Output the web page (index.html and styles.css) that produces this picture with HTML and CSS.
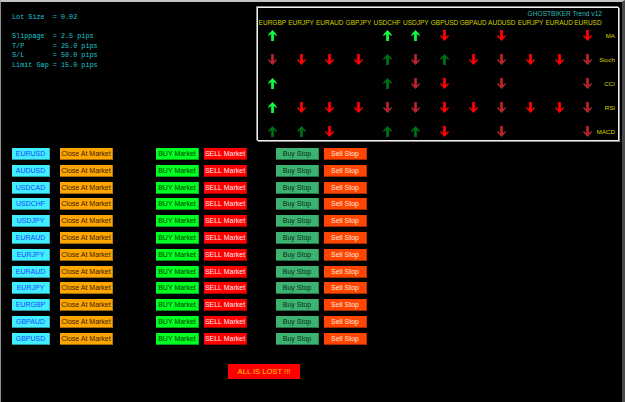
FILE: index.html
```html
<!DOCTYPE html>
<html lang="en">
  <head>
    <meta charset="UTF-8" />
    <title>GHOSTBIKER Trend v12</title>
    <link rel="stylesheet" href="styles.css">
  </head>

  <body>
    <svg class="defs" width="0" height="0">
      <symbol id="up" viewBox="0 0 9 12">
        <polygon points="4.5,0 9,5 9,6.8 6,4.4 6,12 3,12 3,4.4 0,6.8 0,5" />
      </symbol>
      <symbol id="down" viewBox="0 0 9 12">
        <polygon points="4.5,12 9,7 9,5.2 6,7.6 6,0 3,0 3,7.6 0,5.2 0,7" />
      </symbol>
    </svg>

    <div class="screen">
      <div class="top">
        <pre class="settings">Lot Size  = 0.02

Slippage  = 2.5 pips
T/P       = 25.0 pips
S/L       = 50.0 pips
Limit Gap = 15.0 pips</pre>

        <div class="panel">
          <div class="title">GHOSTBIKER Trend v12</div>
          <div class="prow head" id="pairHead"></div>
          <div id="trendRows"></div>
        </div>
      </div>

      <div class="orders" id="orders"></div>

      <button class="lost">ALL IS LOST !!!</button>
    </div>

    <script>
      const pares = ["EURGBP", "EURJPY", "EURAUD", "GBPJPY", "USDCHF", "USDJPY",
        "GBPUSD", "GBPAUD", "AUDUSD", "EURJPY", "EURAUD", "EURUSD"];

      // U = verde claro, u = verde escuro, D = vermelho, d = vermelho escuro
      const linhas = [
        ["MA",    "U...UUD.D..D"],
        ["Stoch", "dDDDuduDdDDd"],
        ["CCI",   "U...udD.d..d"],
        ["RSI",   "UDDDddDDdDDd"],
        ["MACD",  "uuD.uuD.d..d"]
      ];

      const classes = { U: "up g1", u: "up g2", D: "down r1", d: "down r2" };

      const head = document.getElementById("pairHead");
      pares.forEach((p) => {
        head.innerHTML += `<div class="cell">${p}</div>`;
      });

      const trendRows = document.getElementById("trendRows");
      linhas.forEach(([nome, sinais]) => {
        let html = `<div class="prow trend">`;
        sinais.split("").forEach((s) => {
          if (s === ".") {
            html += `<div class="cell"></div>`;
          } else {
            const c = classes[s];
            const icon = c.startsWith("up") ? "up" : "down";
            html += `<div class="cell"><svg class="arr ${c}"><use href="#${icon}"/></svg></div>`;
          }
        });
        html += `<div class="label"><span>${nome}</span></div></div>`;
        trendRows.innerHTML += html;
      });

      const ordens = ["EURUSD", "AUDUSD", "USDCAD", "USDCHF", "USDJPY", "EURAUD",
        "EURJPY", "EURAUD", "EURJPY", "EURGBP", "GBPAUD", "GBPUSD"];

      const orders = document.getElementById("orders");
      ordens.forEach((p) => {
        orders.innerHTML += `
          <div class="orow">
            <button class="btn pair">${p}</button>
            <button class="btn close">Close At Market</button>
            <button class="btn buy">BUY Market</button>
            <button class="btn sell">SELL Market</button>
            <button class="btn buystop">Buy Stop</button>
            <button class="btn sellstop">Sell Stop</button>
          </div>`;
      });
    </script>
  </body>
</html>
```

FILE: styles.css
```css
body {
  margin: 0;
  padding: 0;
  background-color: #000;
  font-family: "Liberation Sans", Arial, sans-serif;
}

.defs {
  position: absolute;
}

.screen {
  box-sizing: border-box;
  width: 625px;
  height: 402px;
  border-top: 2px solid #c4c4c4;
  border-left: 1px solid #8c8c8c;
  border-right: 3px solid #4a4a4a;
  background-color: #000;
}

.top {
  display: flex;
  padding: 5px 0 0 11px;
}

.settings {
  margin: 6px 0 0 0;
  font-family: "Liberation Mono", monospace;
  font-size: 6.8px;
  line-height: 9.6px;
  color: #1fc4d0;
}

.panel {
  margin-left: auto;
  margin-right: 3px;
  width: 360px;
  height: 132px;
  border: 1px solid #f0f0f0;
  box-shadow: -1px -1px 0 #8a8a8a, 1px 1px 0 #8a8a8a;
}

.title {
  height: 10px;
  line-height: 10px;
  padding-top: 1px;
  padding-right: 16px;
  text-align: right;
  font-size: 6.6px;
  color: #34b8b8;
}

.prow {
  display: flex;
}

.cell {
  width: 28.7px;
  flex-shrink: 0;
  display: flex;
  justify-content: center;
}

.head {
  height: 8px;
  line-height: 8px;
  font-size: 6.5px;
  color: #d0d000;
  white-space: nowrap;
}

.trend {
  height: 24px;
  padding-top: 3px;
  box-sizing: border-box;
  align-items: flex-start;
}

.trend .cell {
  height: 11px;
  align-items: center;
}

.arr {
  width: 9px;
  height: 11px;
}

.g1 { fill: #10ff40; }
.g2 { fill: #006e14; }
.r1 { fill: #ff0000; }
.r2 { fill: #b8222a; }

.label {
  flex: 1;
  min-width: 0;
  height: 11px;
  padding-right: 3px;
  display: flex;
  justify-content: flex-end;
  align-items: center;
  white-space: nowrap;
  font-size: 6.2px;
  color: #d4d400;
}

.orders {
  margin-top: 7px;
  padding-left: 11px;
}

.orow {
  display: flex;
  height: 12px;
  margin-bottom: 4.8px;
}

.btn {
  box-sizing: border-box;
  height: 12px;
  padding: 0;
  border: none;
  border-bottom: 1px solid rgba(0, 0, 0, 0.35);
  border-right: 1px solid rgba(0, 0, 0, 0.25);
  font-family: "Liberation Sans", Arial, sans-serif;
  font-size: 7px;
  line-height: 11px;
  text-align: center;
  white-space: nowrap;
}

.pair {
  width: 38px;
  background-color: #40eeff;
  color: #2448ff;
}

.close {
  width: 53px;
  margin-left: 10px;
  background-color: #ffa500;
  color: #3a2200;
}

.buy {
  width: 43px;
  margin-left: 43px;
  background-color: #00ff22;
  color: #003c00;
}

.sell {
  width: 43px;
  margin-left: 5px;
  background-color: #ff0000;
  color: #ffe8e8;
}

.buystop {
  width: 43px;
  margin-left: 29px;
  background-color: #3cb371;
  color: #0e2a18;
}

.sellstop {
  width: 43px;
  margin-left: 5px;
  background-color: #ff4500;
  color: #ffe4d8;
}

.lost {
  display: block;
  width: 72px;
  height: 15px;
  margin: 19px 0 0 227px;
  padding: 0;
  border: none;
  background-color: #ff0000;
  color: #ffd000;
  font-family: "Liberation Sans", Arial, sans-serif;
  font-size: 7.6px;
}
```
